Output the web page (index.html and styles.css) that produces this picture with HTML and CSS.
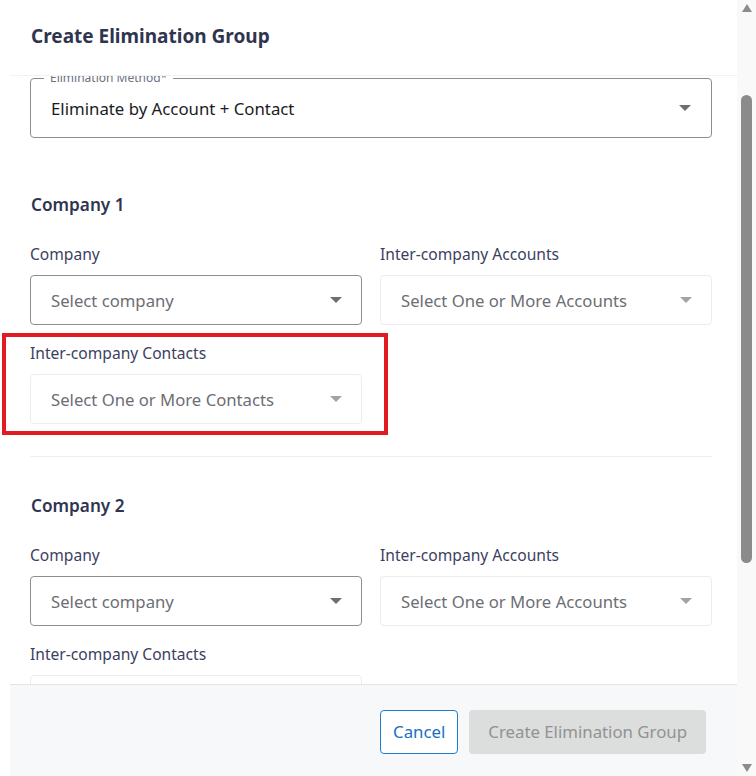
FILE: index.html
```html
<!DOCTYPE html>
<html lang="en">
<head>
    <meta charset="UTF-8">
    <meta name="viewport" content="width=device-width, initial-scale=1.0">
    <title>Create Elimination Group</title>
    <link rel="stylesheet" href="styles.css">
</head>
<body>
    <div class="window">
        <div class="dialog">
            <div class="dialog-header">
                <h2 class="dialog-title">Create Elimination Group</h2>
            </div>

            <div class="dialog-body">
                <div class="dialog-scroll">
                    <div class="outlined-select">
                        <span class="outlined-label">Elimination Method*</span>
                        <span class="select-value">Eliminate by Account + Contact</span>
                        <span class="caret"></span>
                    </div>

                    <!-- Company 1 -->
                    <div class="company-section">
                        <h3 class="company-title">Company 1</h3>
                        <div class="field-grid">
                            <div class="field">
                                <label class="field-label">Company</label>
                                <div class="select">
                                    <span class="placeholder">Select company</span>
                                    <span class="caret"></span>
                                </div>
                            </div>
                            <div class="field">
                                <label class="field-label">Inter-company Accounts</label>
                                <div class="select disabled">
                                    <span class="placeholder">Select One or More Accounts</span>
                                    <span class="caret"></span>
                                </div>
                            </div>
                            <div class="field highlighted">
                                <label class="field-label">Inter-company Contacts</label>
                                <div class="select disabled">
                                    <span class="placeholder">Select One or More Contacts</span>
                                    <span class="caret"></span>
                                </div>
                                <div class="highlight-box"></div>
                            </div>
                        </div>
                    </div>

                    <div class="divider"></div>

                    <!-- Company 2 -->
                    <div class="company-section second">
                        <h3 class="company-title">Company 2</h3>
                        <div class="field-grid">
                            <div class="field">
                                <label class="field-label">Company</label>
                                <div class="select">
                                    <span class="placeholder">Select company</span>
                                    <span class="caret"></span>
                                </div>
                            </div>
                            <div class="field">
                                <label class="field-label">Inter-company Accounts</label>
                                <div class="select disabled">
                                    <span class="placeholder">Select One or More Accounts</span>
                                    <span class="caret"></span>
                                </div>
                            </div>
                            <div class="field">
                                <label class="field-label">Inter-company Contacts</label>
                                <div class="select disabled">
                                    <span class="placeholder">Select One or More Contacts</span>
                                    <span class="caret"></span>
                                </div>
                            </div>
                        </div>
                    </div>
                </div>
            </div>

            <div class="dialog-footer">
                <button class="btn btn-outline">Cancel</button>
                <button class="btn btn-disabled" disabled>Create Elimination Group</button>
            </div>
        </div>

        <div class="scrollbar">
            <span class="scroll-arrow up"></span>
            <div class="scroll-track">
                <div class="scroll-thumb"></div>
            </div>
            <span class="scroll-arrow down"></span>
        </div>
    </div>
</body>
</html>
```

FILE: styles.css
```css
* {
    box-sizing: border-box;
}

body {
    margin: 0;
    background-color: white;
    font-family: 'Noto Sans', 'Open Sans', sans-serif;
    overflow: hidden;
}

.window {
    display: flex;
    height: 776px;
    width: 756px;
}

.dialog {
    display: flex;
    flex-direction: column;
    width: 737px;
    height: 100%;
}

.dialog-header {
    height: 76px;
    margin-left: 10px;
    padding-left: 21px;
    display: flex;
    align-items: center;
    border-bottom: 1px solid #f1f2f4;
    flex-shrink: 0;
}

.dialog-title {
    margin: 0 0 4px 0;
    font-size: 19px;
    font-weight: 700;
    color: #30354f;
}

.dialog-body {
    flex: 1;
    overflow: hidden;
}

/* content is scrolled a few px down */
.dialog-scroll {
    margin-top: -7px;
    padding: 0 25px 0 30px;
}

.outlined-select {
    position: relative;
    height: 60px;
    margin-top: 9px;
    border: 1px solid #8e8e8e;
    border-radius: 4px;
    display: flex;
    align-items: center;
    padding: 0 20px;
}

.outlined-label {
    position: absolute;
    top: -9px;
    left: 13px;
    padding: 0 6px;
    background-color: white;
    font-size: 12px;
    color: #6c6f80;
    line-height: 16px;
}

.select-value {
    flex: 1;
    font-size: 16.8px;
    color: #1b1b1f;
}

.caret {
    width: 0;
    height: 0;
    border-left: 6px solid transparent;
    border-right: 6px solid transparent;
    border-top: 6px solid #6e6e6e;
}

.company-section {
    padding-top: 55px;
    padding-bottom: 32px;
}

.company-section.second {
    padding-top: 37px;
}

.company-title {
    margin: 0 0 27px 1px;
    font-size: 17.2px;
    font-weight: 600;
    line-height: 24px;
    color: #30354f;
}

.field-grid {
    display: grid;
    grid-template-columns: 1fr 1fr;
    column-gap: 18px;
    row-gap: 18px;
}

.field {
    position: relative;
}

.field-label {
    display: block;
    font-size: 15.6px;
    line-height: 20px;
    margin: 0 0 11px 0;
    color: #3c4060;
}

.select {
    height: 50px;
    border: 1px solid #8e8e8e;
    border-radius: 4px;
    display: flex;
    align-items: center;
    padding: 0 19px 0 20px;
}

.select.disabled {
    border-color: #ececec;
}

.select.disabled .caret {
    border-top-color: #a3a3a3;
}

.placeholder {
    flex: 1;
    font-size: 16.7px;
    color: #6d6e74;
}

.highlight-box {
    position: absolute;
    left: -28px;
    right: -26px;
    top: -10px;
    bottom: -11px;
    border: 4px solid #e21b22;
}

.divider {
    height: 1px;
    background-color: #efeff1;
}

.dialog-footer {
    height: 92px;
    flex-shrink: 0;
    margin-left: 10px;
    background-color: #f7f8fa;
    border-top: 1px solid #e2e4ea;
    display: flex;
    justify-content: flex-end;
    align-items: flex-start;
    gap: 11px;
    padding: 25px 31px 0 0;
}

.btn {
    height: 44px;
    border-radius: 4px;
    font-family: 'Noto Sans', 'Open Sans', sans-serif;
    font-size: 16.8px;
    padding: 0 12px 1px;
}

.btn-outline {
    background-color: white;
    border: 1px solid #1a7dcf;
    color: #1a6fbf;
}

.btn-disabled {
    background-color: #dcdddd;
    border: none;
    color: #929292;
    padding: 0 19px 1px;
}

/* scrollbar */
.scrollbar {
    width: 19px;
    height: 100%;
    background-color: #f9f9f9;
    display: flex;
    flex-direction: column;
    align-items: center;
    padding: 4px 0;
}

.scroll-arrow {
    width: 0;
    height: 0;
    border-left: 5.5px solid transparent;
    border-right: 5.5px solid transparent;
}

.scroll-arrow.up {
    border-bottom: 8px solid #8c8c8c;
}

.scroll-arrow.down {
    border-top: 8px solid #8c8c8c;
}

.scroll-track {
    flex: 1;
    width: 100%;
    display: flex;
    justify-content: center;
}

.scroll-thumb {
    width: 11px;
    height: 468px;
    margin-top: 83px;
    border-radius: 6px;
    background-color: #8b8b8b;
}
```
